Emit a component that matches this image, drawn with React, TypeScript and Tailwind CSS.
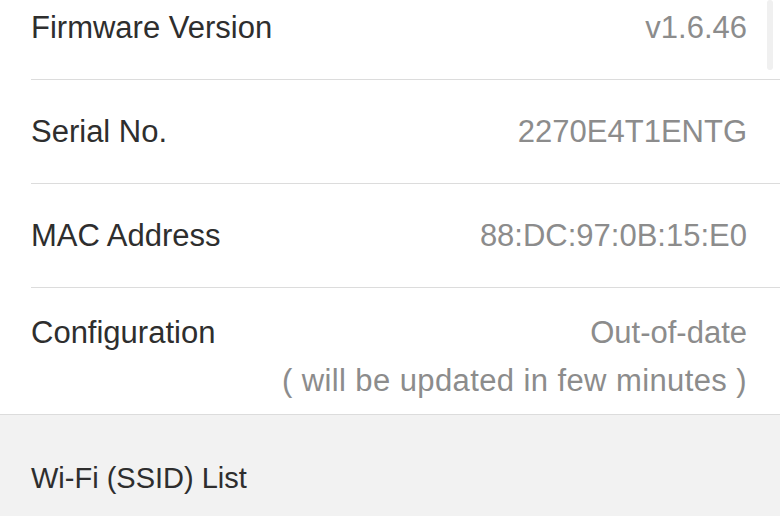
export default function App() {
  const rows = [
    { label: 'Firmware Version', value: 'v1.6.46' },
    { label: 'Serial No.', value: '2270E4T1ENTG' },
    { label: 'MAC Address', value: '88:DC:97:0B:15:E0' },
  ];

  return (
    <div
      className="relative w-[780px] h-[516px] overflow-hidden bg-white"
      style={{ fontFamily: '"Liberation Sans", Arial, sans-serif' }}
    >
      {/* list scrolled up a little */}
      <div className="-mt-[24px]">
        {rows.map((row) => (
          <div key={row.label} className="pl-[31px]">
            <div className="flex h-[103px] items-center justify-between pr-[33px] text-[31px] leading-[36px]">
              <span className="text-[#2e2e2e]">{row.label}</span>
              <span className="text-[#8c8c8c]">{row.value}</span>
            </div>
            <div className="h-px bg-[#dcdcdc]" />
          </div>
        ))}

        <div className="flex h-[126px] items-start justify-between pl-[31px] pr-[33px] pt-[27px] text-[31px] leading-[36px]">
          <span className="text-[#2e2e2e]">Configuration</span>
          <div className="flex flex-col items-end text-[#8c8c8c]">
            <span>Out-of-date</span>
            <span className="mt-[12px] tracking-[0.4px]">( will be updated in few minutes )</span>
          </div>
        </div>

        {/* section header */}
        <div className="h-[130px] border-t border-[#dcdcdc] bg-[#f2f2f2] pl-[31px] pt-[46px]">
          <span className="text-[29px] leading-[34px] text-[#2e2e2e]">Wi-Fi (SSID) List</span>
        </div>
      </div>

      {/* scroll indicator */}
      <div className="absolute right-[7px] top-0 h-[70px] w-[6px] rounded-full bg-[#f0f0f0]" />
    </div>
  );
}
